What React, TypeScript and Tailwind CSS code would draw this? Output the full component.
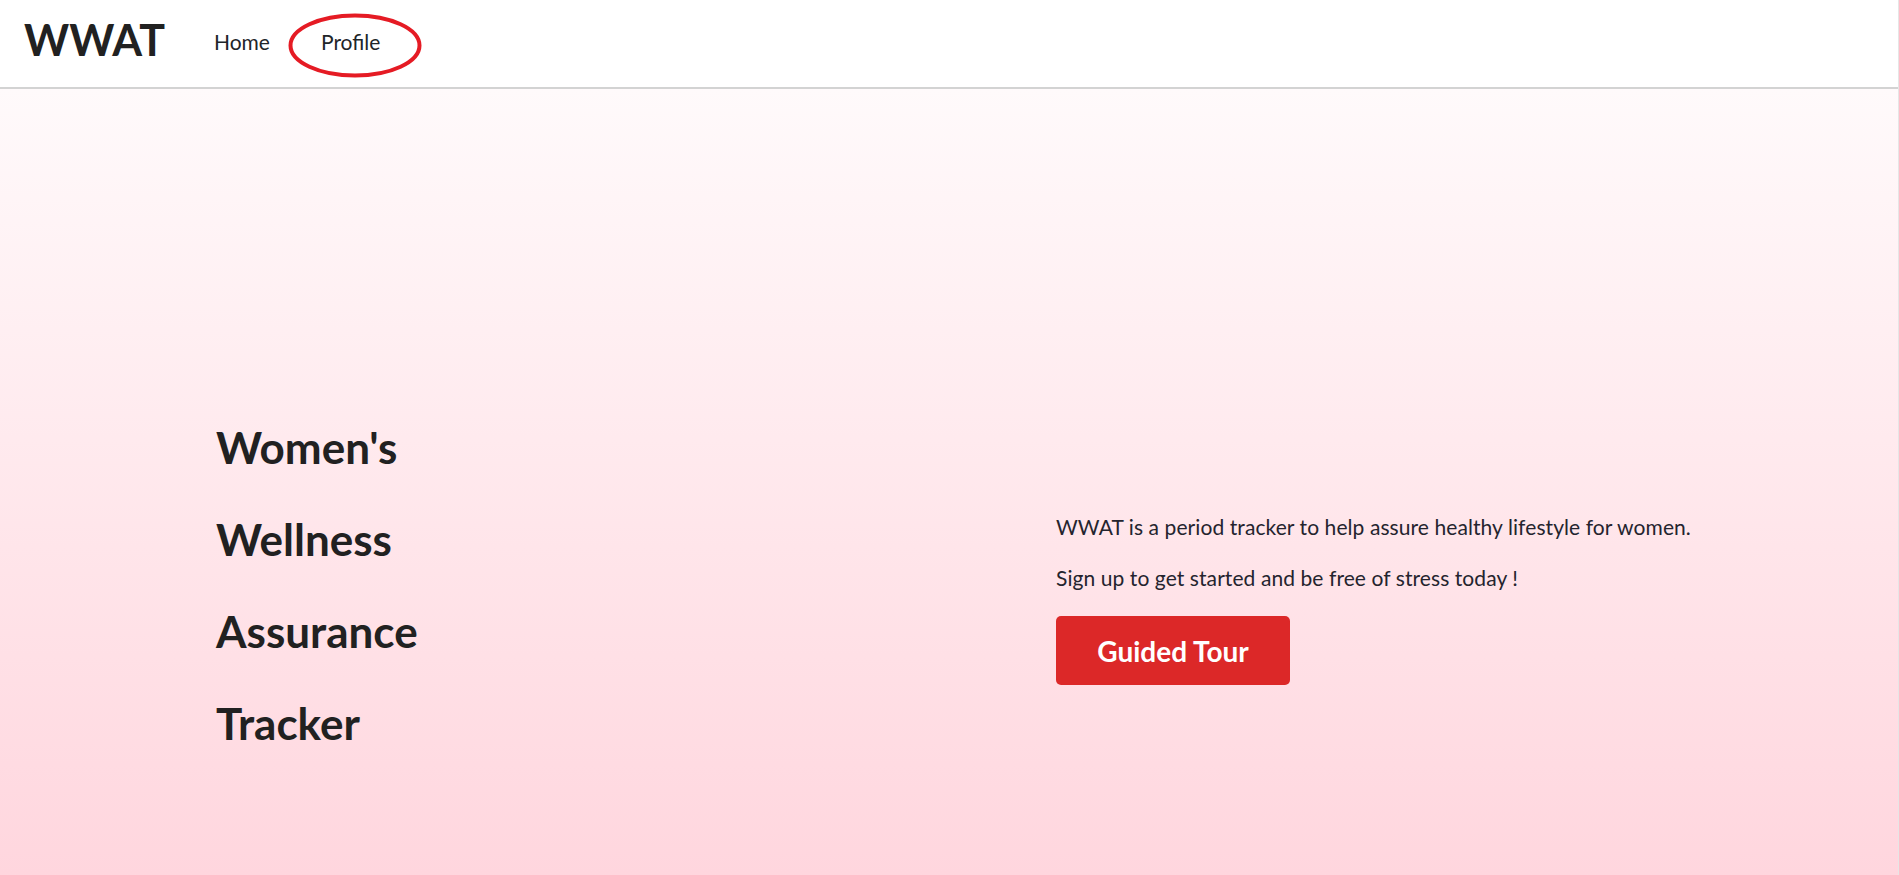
const headings = ["Women's", "Wellness", "Assurance", "Tracker"];

const NavBar = () => {
  return (
    <header className="flex items-start gap-[49px] h-[89px] pl-6 bg-white border-b-2 border-[#d3d3d3]">
      <a className="mt-[13px] text-[43px] leading-[53px] font-bold text-[#212121]">WWAT</a>
      <a className="mt-[29px] text-[21px] leading-[25px] text-[#212529]">Home</a>
      <div className="relative mt-[29px] ml-[2px]">
        <a className="text-[21px] leading-[25px] text-[#212529]">Profile</a>
        {/* hand drawn highlight round the link */}
        <svg
          className="absolute left-[-33px] top-[-16px] pointer-events-none"
          width="134"
          height="65"
          viewBox="0 0 134 65"
        >
          <ellipse cx="67" cy="32.5" rx="64.5" ry="30" fill="none" stroke="#e51b24" strokeWidth="4" />
        </svg>
      </div>
    </header>
  );
};

export default function App() {
  return (
    <div
      className="w-full min-h-[875px] border-r border-[#e6e6e6]"
      style={{ fontFamily: "Lato, 'Open Sans', sans-serif" }}
    >
      <NavBar />
      <main className="flex items-start min-h-[786px] bg-linear-to-b from-[#fffafb] to-[#ffd6de]">
        <div className="w-[1056px] pl-[216px] pt-[312px]">
          {headings.map((h) => (
            <h1 key={h} className="text-[44px] leading-[92px] font-bold text-[#212121]">
              {h}
            </h1>
          ))}
        </div>
        <div className="pt-[423px] text-[#24242e]">
          <p className="text-[21px] leading-[30px] tracking-[0.08px]">
            WWAT is a period tracker to help assure healthy lifestyle for women.
          </p>
          <p className="mt-[21px] text-[21px] leading-[30px] tracking-[0.08px]">
            Sign up to get started and be free of stress today !
          </p>
          <button className="mt-[23px] w-[234px] h-[69px] rounded-[5px] bg-[#dc2828] text-white text-[28px] font-bold">
            Guided Tour
          </button>
        </div>
      </main>
    </div>
  );
}
